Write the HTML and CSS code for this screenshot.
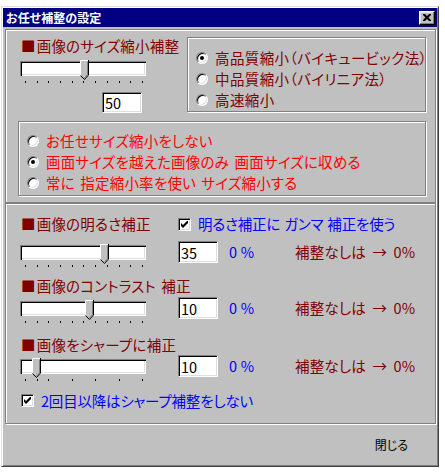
FILE: index.html
```html
<!DOCTYPE html>
<html lang="ja">
<head>
  <meta charset="UTF-8" />
  <title>お任せ補整の設定</title>
  <link rel="stylesheet" href="styles.css">
</head>
<body>

  <div class="window">
    <div class="titlebar">
      <span class="title">お任せ補整の設定</span>
      <button class="close" aria-label="閉じる">
        <svg width="8" height="7" viewBox="0 0 8 7"><path d="M0 0h2l2 2 2-2h2v1L5.5 3.5 8 6v1H6L4 5 2 7H0V6l2.5-2.5L0 1z" fill="#000"/></svg>
      </button>
    </div>

    <!-- Size reduction -->
    <div class="panel size-panel">
      <div class="size-top">
        <div class="size-left">
          <div class="heading"><span class="sq">■</span>画像のサイズ縮小補整</div>
          <div class="slider">
            <div class="track">
              <svg class="thumb" style="left:60px" width="9" height="20" viewBox="0 0 9 20"><path d="M0.5 15V0.5H8.5V15L4.5 19.5Z" fill="#c0c0c0" stroke="none"/><path d="M0.5 15V0.5H8" stroke="#fff" fill="none"/><path d="M8.5 0V15L4.5 19.5L0.5 15.5" stroke="#000" fill="none"/><path d="M7.5 1.5V14.6L4.5 18" stroke="#808080" fill="none"/></svg>
            </div>
            <div class="ticks"><i></i><i></i><i></i><i></i><i></i><i></i><i></i><i></i><i></i><i></i><i></i></div>
          </div>
          <input class="field size-field" type="text" value="50">
        </div>
        <div class="group quality">
          <label class="opt"><span class="radio on"></span>高品質縮小（バイキュービック法）</label>
          <label class="opt"><span class="radio"></span>中品質縮小（バイリニア法）</label>
          <label class="opt"><span class="radio"></span>高速縮小</label>
        </div>
      </div>
      <div class="group fit">
        <label class="opt"><span class="radio"></span>お任せサイズ縮小をしない</label>
        <label class="opt"><span class="radio on"></span>画面サイズを越えた画像のみ 画面サイズに収める</label>
        <label class="opt"><span class="radio"></span>常に 指定縮小率を使い サイズ縮小する</label>
      </div>
    </div>

    <!-- Corrections -->
    <div class="panel adjust-panel">
      <div class="head-row">
        <div class="heading"><span class="sq">■</span>画像の明るさ補正</div>
        <label class="check-label"><span class="check on"><svg width="7" height="7" viewBox="0 0 7 7"><path d="M0 2L2 4L7 -1V2L2 7L0 5Z" fill="#000"/></svg></span>明るさ補正に ガンマ 補正を使う</label>
      </div>
      <div class="ctl-row">
        <div class="slider">
          <div class="track">
            <svg class="thumb" style="left:80px" width="9" height="20" viewBox="0 0 9 20"><path d="M0.5 15V0.5H8.5V15L4.5 19.5Z" fill="#c0c0c0" stroke="none"/><path d="M0.5 15V0.5H8" stroke="#fff" fill="none"/><path d="M8.5 0V15L4.5 19.5L0.5 15.5" stroke="#000" fill="none"/><path d="M7.5 1.5V14.6L4.5 18" stroke="#808080" fill="none"/></svg>
          </div>
          <div class="ticks"><i></i><i></i><i></i><i></i><i></i><i></i><i></i><i></i><i></i><i></i><i></i></div>
        </div>
        <input class="field" type="text" value="35">
        <span class="pct">0 %</span>
        <span class="note">補整なしは → 0%</span>
      </div>

      <div class="heading sec2"><span class="sq">■</span>画像のコントラスト 補正</div>
      <div class="ctl-row tight">
        <div class="slider">
          <div class="track">
            <svg class="thumb" style="left:65px" width="9" height="20" viewBox="0 0 9 20"><path d="M0.5 15V0.5H8.5V15L4.5 19.5Z" fill="#c0c0c0" stroke="none"/><path d="M0.5 15V0.5H8" stroke="#fff" fill="none"/><path d="M8.5 0V15L4.5 19.5L0.5 15.5" stroke="#000" fill="none"/><path d="M7.5 1.5V14.6L4.5 18" stroke="#808080" fill="none"/></svg>
          </div>
          <div class="ticks"><i></i><i></i><i></i><i></i><i></i><i></i><i></i><i></i><i></i><i></i><i></i></div>
        </div>
        <input class="field" type="text" value="10">
        <span class="pct">0 %</span>
        <span class="note">補整なしは → 0%</span>
      </div>

      <div class="heading sec3"><span class="sq">■</span>画像をシャープに補正</div>
      <div class="ctl-row tighter">
        <div class="slider">
          <div class="track">
            <svg class="thumb" style="left:12px" width="9" height="20" viewBox="0 0 9 20"><path d="M0.5 15V0.5H8.5V15L4.5 19.5Z" fill="#c0c0c0" stroke="none"/><path d="M0.5 15V0.5H8" stroke="#fff" fill="none"/><path d="M8.5 0V15L4.5 19.5L0.5 15.5" stroke="#000" fill="none"/><path d="M7.5 1.5V14.6L4.5 18" stroke="#808080" fill="none"/></svg>
          </div>
          <div class="ticks"><i></i><i></i><i></i><i class="off"></i><i></i><i class="off"></i><i></i><i class="off"></i><i></i><i class="off"></i><i></i></div>
        </div>
        <input class="field" type="text" value="10">
        <span class="pct">0 %</span>
        <span class="note">補整なしは → 0%</span>
      </div>

      <label class="check-label bottom-check"><span class="check on"><svg width="7" height="7" viewBox="0 0 7 7"><path d="M0 2L2 4L7 -1V2L2 7L0 5Z" fill="#000"/></svg></span>2回目以降はシャープ補整をしない</label>
    </div>

    <div class="footer">
      <button class="close-btn">閉じる</button>
    </div>
  </div>

</body>
</html>
```

FILE: styles.css
```css
body {
  margin: 0;
  background-color: #ffffff;
  font-family: "Noto Sans CJK JP", sans-serif;
  font-size: 14.5px;
  font-feature-settings: "palt";
  letter-spacing: 0.2px;
  word-spacing: 2px;
}
.window {
  margin: 6px 0 0 1px;
  width: 438px;
  height: 461px;
  box-sizing: border-box;
  padding: 1px;
  background-color: #c0c0c0;
  border: 1px solid;
  border-color: #dfdfdf #404040 #404040 #dfdfdf;
  box-shadow: inset 1px 1px #fff, inset -1px -1px #808080;
}
.titlebar {
  height: 19px;
  background-color: #000080;
  display: flex;
  align-items: center;
  justify-content: space-between;
  padding: 0 2px 0 3px;
}
.title {
  color: white;
  font-size: 12px;
  font-weight: bold;
  line-height: 19px;
  letter-spacing: 0.1px;
}
.close {
  width: 16px;
  height: 14px;
  padding: 0;
  border: 1px solid;
  border-color: #fff #000 #000 #fff;
  box-shadow: inset -1px -1px #808080, inset 1px 1px #dfdfdf;
  background-color: #c0c0c0;
  display: flex;
  align-items: center;
  justify-content: center;
}
.close svg {
  display: block;
}

/* etched frames */
.panel, .group {
  box-sizing: border-box;
  border: 1px solid #808080;
  box-shadow: inset 1px 1px #fff, 1px 1px #fff;
}
.panel {
  margin-left: 2px;
  width: 431px;
}
.size-panel {
  margin-top: 2px;
  height: 174px;
  padding: 7px 0 0 12px;
}
.adjust-panel {
  height: 221px;
  padding: 13px 0 0 14px;
}

.heading {
  color: #800000;
  line-height: 14px;
  height: 14px;
  white-space: nowrap;
}
.sq {
  margin-right: 1px;
}

.size-top {
  display: flex;
}
.size-left {
  width: 169px;
}
.size-left .heading {
  margin: 2px 0 0 3px;
}
.size-left .slider {
  margin: 8px 0 0 2px;
}

.slider {
  width: 126px;
}
.track {
  position: relative;
  height: 15px;
  background-color: #fff;
  box-shadow: inset 1px 1px #808080, inset 2px 2px #000, inset -1px -1px #fff, inset -2px -2px #dfdfdf;
}
.thumb {
  position: absolute;
  top: -1px;
  display: block;
}
.ticks {
  display: flex;
  justify-content: space-between;
  width: 118px;
  margin: 5px 0 0 5px;
  height: 2px;
}
.ticks i {
  width: 1px;
  height: 2px;
  background-color: #000;
}
.ticks i.off {
  background-color: transparent;
}

.field {
  display: block;
  box-sizing: border-box;
  width: 40px;
  height: 22px;
  margin: 0;
  padding: 0 0 0 2px;
  border: 1px solid;
  border-color: #808080 #fff #fff #808080;
  box-shadow: inset 1px 1px #000, inset -1px -1px #dfdfdf;
  background-color: #fff;
  font-family: "Noto Sans CJK JP", sans-serif;
  font-size: 14.5px;
  color: #000;
  outline: none;
}
.size-field {
  height: 21px;
  margin: 9px 0 0 84px;
}

.quality {
  width: 239px;
  height: 75px;
  padding: 9px 0 0 8px;
}
.fit {
  width: 408px;
  height: 75px;
  margin-top: 8px;
  padding: 8px 0 0 8px;
}
.opt {
  display: flex;
  align-items: center;
  gap: 7px;
  height: 21px;
  white-space: nowrap;
}
.quality .opt {
  color: #800000;
  letter-spacing: 0.4px;
}
.fit .opt {
  color: #ff0000;
}
.radio {
  position: relative;
  width: 12px;
  height: 12px;
  box-sizing: border-box;
  border-radius: 50%;
  border: 1px solid;
  border-color: #808080 #fff #fff #808080;
  box-shadow: inset 1px 1px #000, inset -1px -1px #dfdfdf;
  background-color: #fff;
  flex: none;
}
.radio.on::after {
  content: "";
  position: absolute;
  left: 3px;
  top: 3px;
  width: 4px;
  height: 4px;
  border-radius: 50%;
  background-color: #000;
}

.head-row {
  display: grid;
  grid-template-columns: 158px 1fr;
  align-items: center;
  height: 14px;
}
.head-row .heading,
.adjust-panel > .heading {
  margin-left: 1px;
}
.check-label {
  display: flex;
  align-items: center;
  gap: 7px;
  color: #0000ff;
  white-space: nowrap;
  line-height: 14px;
  letter-spacing: -0.2px;
  word-spacing: 1px;
}
.check {
  width: 13px;
  height: 13px;
  box-sizing: border-box;
  border: 1px solid;
  border-color: #808080 #fff #fff #808080;
  box-shadow: inset 1px 1px #000, inset -1px -1px #dfdfdf;
  background-color: #fff;
  display: flex;
  align-items: center;
  justify-content: center;
  flex: none;
}
.check svg {
  display: block;
}

.ctl-row {
  display: grid;
  grid-template-columns: 158px 51px 66px 1fr;
  margin-top: 10px;
  height: 26px;
}
.ctl-row .track {
  margin-top: 4px;
}
.ctl-row.tight {
  margin-top: 4px;
}
.ctl-row.tighter {
  margin-top: 3px;
}
.pct {
  color: #0000ff;
  line-height: 22px;
  word-spacing: 0;
}
.note {
  color: #800000;
  line-height: 22px;
  white-space: nowrap;
  word-spacing: 3px;
}
.sec2 {
  margin-top: 12px;
}
.sec3 {
  margin-top: 15px;
}
.bottom-check {
  margin: 13px 0 0 1px;
  height: 13px;
}

.footer {
  height: 39px;
  display: flex;
  align-items: center;
  justify-content: flex-end;
  padding-right: 29px;
}
.close-btn {
  border: none;
  background: none;
  padding: 0;
  font-family: "Noto Sans CJK JP", sans-serif;
  font-size: 12px;
  font-feature-settings: "palt";
  color: #000;
  margin-top: 1px;
}
```
